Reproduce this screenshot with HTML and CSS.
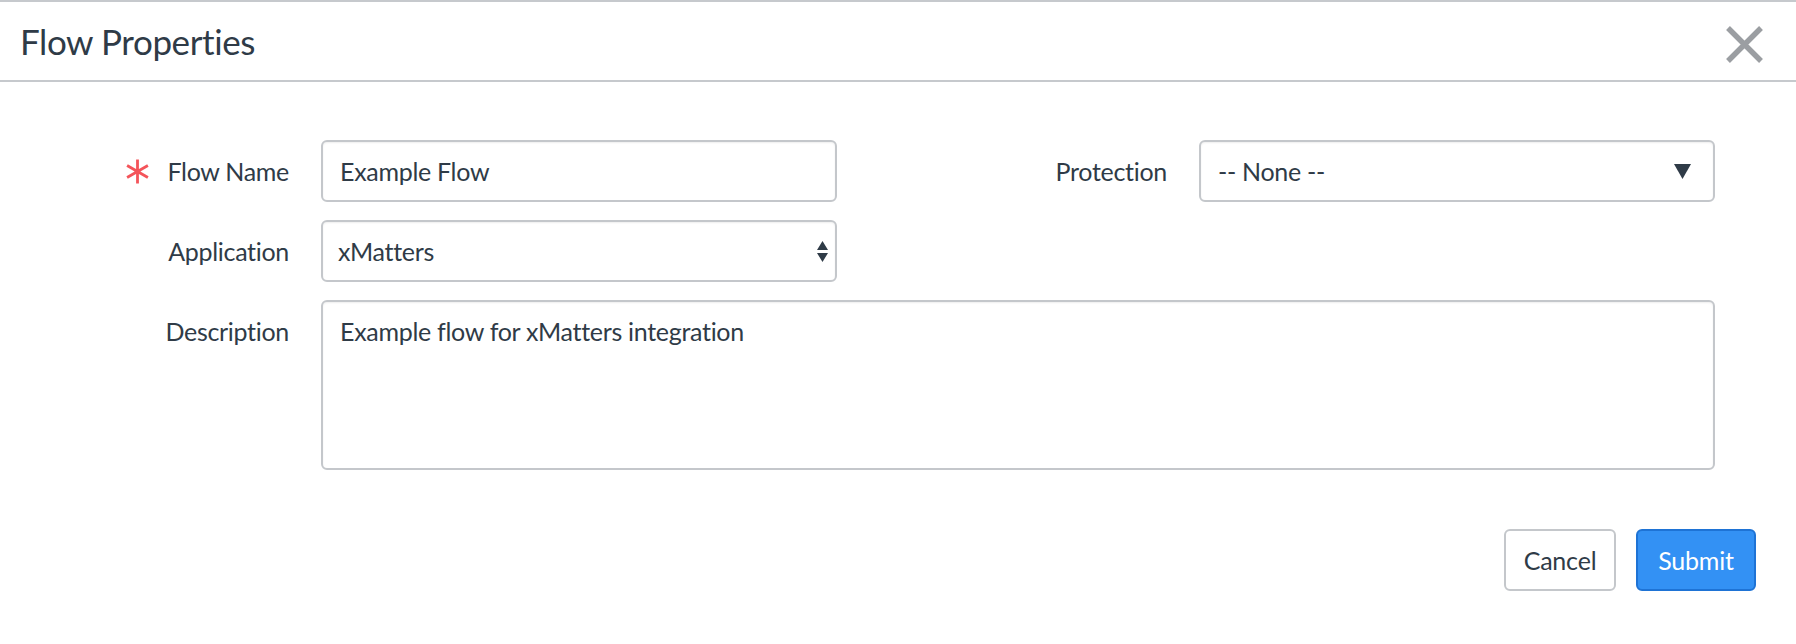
FILE: index.html
```html
<!DOCTYPE html>
<html lang="en">
<head>
<meta charset="utf-8">
<title>Flow Properties</title>
<link rel="stylesheet" href="styles.css">
</head>
<body>
<div class="dialog">
  <header class="dlg-header">
    <h1 class="dlg-title">Flow Properties</h1>
    <button class="close" type="button" aria-label="Close">
      <svg width="37" height="37" viewBox="0 0 37 37"><path d="M2 2 L35 35 M35 2 L2 35" stroke="#9b9ea2" stroke-width="5.4" fill="none"/></svg>
    </button>
  </header>
  <form class="dlg-body">
    <div class="form-grid">
      <label class="lbl">
        <svg class="req" width="25" height="25" viewBox="0 0 25 25"><path d="M12.5 0.5 V24.5 M2.1 6.5 L22.9 18.5 M2.1 18.5 L22.9 6.5" stroke="#f4545a" stroke-width="2.8" fill="none"/></svg>
        <span>Flow Name</span>
      </label>
      <input class="field input" type="text" value="Example Flow">
      <label class="lbl">Protection</label>
      <div class="field select">
        <span class="sel-text">-- None --</span>
        <svg class="caret" width="17" height="15" viewBox="0 0 17 15"><path d="M0 0 H17 L8.5 15 Z" fill="#2f3b47"/></svg>
      </div>
      <label class="lbl">Application</label>
      <div class="field select native">
        <span class="sel-text">xMatters</span>
        <svg class="updown" width="11" height="21" viewBox="0 0 11 21"><path d="M0 9 L5.5 0 L11 9 Z M0 12 H11 L5.5 21 Z" fill="#2f3b47"/></svg>
      </div>
      <label class="lbl lbl-desc">Description</label>
      <textarea class="field area">Example flow for xMatters integration</textarea>
    </div>
    <div class="actions">
      <button class="btn" type="button">Cancel</button>
      <button class="btn primary" type="button">Submit</button>
    </div>
  </form>
</div>
</body>
</html>
```

FILE: styles.css
```css
* { box-sizing: border-box; }

html, body {
  margin: 0;
  padding: 0;
  background: #ffffff;
}

body {
  font-family: Lato, "Noto Sans", sans-serif;
  color: #2f3b47;
  width: 1796px;
  height: 644px;
  overflow: hidden;
}

.dialog {
  width: 1796px;
  height: 644px;
  background: #ffffff;
  border-top: 2px solid #c6c9cd;
}

.dlg-header {
  display: flex;
  align-items: flex-start;
  justify-content: space-between;
  height: 80px;
  padding: 18px 33px 0 20px;
  border-bottom: 2px solid #c6c9cd;
}

.dlg-title {
  margin: 0;
  font-size: 35px;
  font-weight: 400;
  line-height: 42px;
  letter-spacing: -0.4px;
  color: #2f3b47;
}

.close {
  margin-top: 6px;
  padding: 0;
  border: 0;
  background: none;
  width: 37px;
  height: 37px;
  display: block;
}
.close svg { display: block; }

.dlg-body {
  padding-top: 58px;
}

.form-grid {
  display: grid;
  grid-template-columns: 289px 516px 298px 516px;
  grid-template-rows: 62px 62px 170px;
  column-gap: 32px;
  row-gap: 18px;
}

.lbl {
  display: flex;
  align-items: center;
  justify-content: flex-end;
  font-size: 25px;
  line-height: 62px;
  height: 62px;
  letter-spacing: -0.3px;
  white-space: nowrap;
}

.req { display: block; margin-right: 17px; }

.lbl-desc { grid-column: 1; align-self: start; }

.field {
  font-family: Lato, "Noto Sans", sans-serif;
  font-size: 25px;
  letter-spacing: -0.3px;
  color: #2f3b47;
  border: 2px solid #c4c7cb;
  border-radius: 6px;
  background: #ffffff;
  box-shadow: inset 0 1px 2px rgba(0, 0, 0, 0.07);
  height: 62px;
  width: 100%;
  margin: 0;
}

.input {
  padding: 0 17px;
  outline: none;
}

.select {
  display: flex;
  align-items: center;
  justify-content: space-between;
  padding: 0 22px 0 17px;
}
.select.native { padding: 0 7px 0 15px; }

.caret, .updown { display: block; flex: none; }

.area {
  grid-column: 2 / 5;
  height: 170px;
  resize: none;
  padding: 14px 17px;
  line-height: 30px;
  outline: none;
}

.actions {
  display: flex;
  justify-content: flex-end;
  gap: 20px;
  margin-top: 59px;
  padding-right: 40px;
}

.btn {
  font-family: Lato, "Noto Sans", sans-serif;
  font-size: 25px;
  letter-spacing: -0.2px;
  height: 62px;
  width: 112px;
  padding: 0;
  border-radius: 6px;
  border: 2px solid #c4c7cb;
  background: #ffffff;
  color: #2f3b47;
}

.btn.primary {
  width: 120px;
  background: #3391f4;
  border-color: #1e73d5;
  color: #ffffff;
}
```
